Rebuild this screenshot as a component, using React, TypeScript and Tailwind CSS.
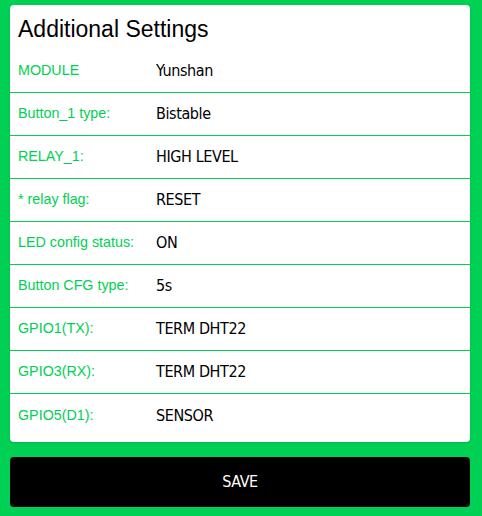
const rows: [string, string][] = [
  ["MODULE", "Yunshan"],
  ["Button_1 type:", "Bistable"],
  ["RELAY_1:", "HIGH LEVEL"],
  ["* relay flag:", "RESET"],
  ["LED config status:", "ON"],
  ["Button CFG type:", "5s"],
  ["GPIO1(TX):", "TERM DHT22"],
  ["GPIO3(RX):", "TERM DHT22"],
  ["GPIO5(D1):", "SENSOR"],
];

const valueFont = "[font-family:'DejaVu_Sans_Condensed',sans-serif]";

const SettingRow = ({ label, value, last }: { label: string; value: string; last: boolean }) => (
  <div className={`flex h-[43px] items-center ${last ? "" : "border-b border-[#00d053]"}`}>
    <span className="w-[146px] shrink-0 pl-2 text-[14.3px] text-[#00d053]">{label}</span>
    <span className={`${valueFont} text-[16px] tracking-[-0.4px] text-black`}>{value}</span>
  </div>
);

export default function App() {
  return (
    <main className="min-h-[516px] bg-[#00d053] pt-[5px] pb-[9px] [font-family:'Liberation_Sans',Arial,sans-serif]">
      <section className="ml-[10px] w-[460px] rounded-[4px] bg-white pb-[5px] shadow-sm">
        <h1 className="pl-2 pt-[11px] pb-[8px] text-[23px] leading-[26px] text-black">Additional Settings</h1>
        {rows.map(([label, value], i) => (
          <SettingRow key={label} label={label} value={value} last={i === rows.length - 1} />
        ))}
      </section>
      <button
        className={`${valueFont} ml-[10px] mt-[15px] flex h-[50px] w-[460px] items-center justify-center rounded-[4px] bg-black text-[16px] tracking-[-0.4px] text-white`}
      >
        SAVE
      </button>
    </main>
  );
}
